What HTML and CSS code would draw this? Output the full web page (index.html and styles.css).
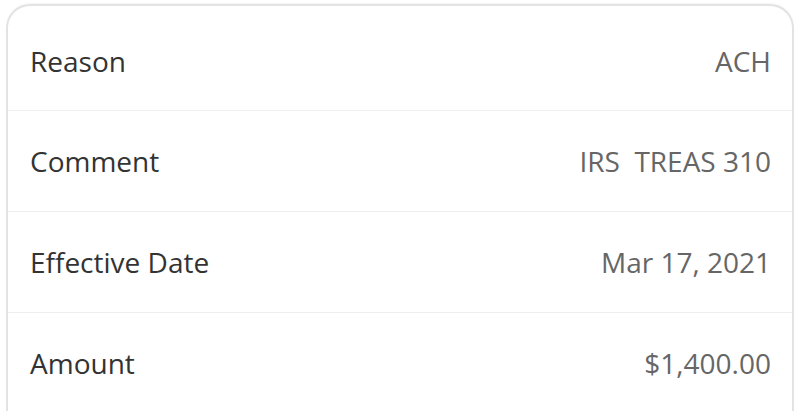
FILE: index.html
```html
<!DOCTYPE html>
<html>
<head>
<meta charset="utf-8">
<link rel="stylesheet" href="styles.css">
</head>
<body>
<div class="card">
  <div class="row first"><span class="label">Reason</span><span class="value">ACH</span></div>
  <div class="row"><span class="label">Comment</span><span class="value">IRS&nbsp;&nbsp;TREAS 310</span></div>
  <div class="row"><span class="label">Effective Date</span><span class="value">Mar 17, 2021</span></div>
  <div class="row last"><span class="label">Amount</span><span class="value">$1,400.00</span></div>
</div>
</body>
</html>
```
FILE: styles.css
```css
html, body {
  margin: 0;
  padding: 0;
  background: #ffffff;
  overflow: hidden;
}
body {
  font-family: "Open Sans", "Noto Sans", sans-serif;
  height: 411px;
}
.card {
  margin: 4px 6px 0 6px;
  border: 2px solid #e3e3e3;
  border-bottom: none;
  border-radius: 24px 24px 0 0;
  height: 420px;
  box-shadow: 0 -1px 1px rgba(0,0,0,0.04);
}
.row {
  display: flex;
  justify-content: space-between;
  align-items: center;
  height: 100px;
  padding: 0 21px 0 22px;
  border-bottom: 1px solid #eeeeee;
}
.row.first {
  height: 98px;
  padding-top: 6px;
}
.row.last {
  border-bottom: none;
}
.label {
  font-size: 28px;
  line-height: 36px;
  color: #333333;
}
.value {
  font-size: 28px;
  line-height: 36px;
  color: #666666;
}
```
